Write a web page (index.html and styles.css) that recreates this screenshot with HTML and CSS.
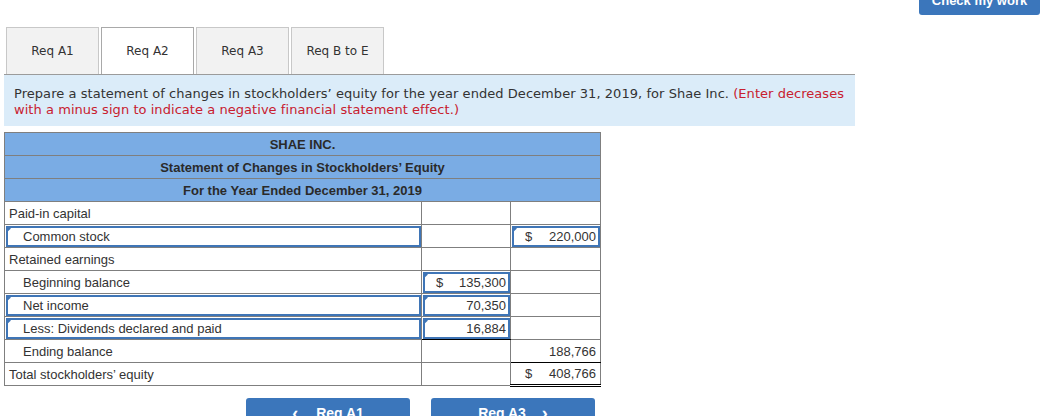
FILE: index.html
```html
<!DOCTYPE html>
<html>
<head>
<meta charset="utf-8">
<link rel="stylesheet" href="styles.css">
</head>
<body>
<div class="topbar"><button class="check">Check my work</button></div>
<div class="wrap">
  <div class="tabs">
    <div class="tab">Req A1</div>
    <div class="tab active">Req A2</div>
    <div class="tab">Req A3</div>
    <div class="tab">Req B to E</div>
  </div>
  <div class="instr">Prepare a statement of changes in stockholders’ equity for the year ended December 31, 2019, for Shae Inc. <span class="red">(Enter decreases with a minus sign to indicate a negative financial statement effect.)</span></div>
  <table class="stmt">
    <colgroup><col class="c1"><col class="c2"><col class="c3"></colgroup>
    <tr class="hd"><td colspan="3">SHAE INC.</td></tr>
    <tr class="hd"><td colspan="3">Statement of Changes in Stockholders’ Equity</td></tr>
    <tr class="hd"><td colspan="3">For the Year Ended December 31, 2019</td></tr>
    <tr><td>Paid-in capital</td><td></td><td></td></tr>
    <tr><td class="inp ind"><span class="flag"></span>Common stock</td><td></td><td class="inp num"><span class="flag"></span><span class="cur">$</span>220,000</td></tr>
    <tr><td>Retained earnings</td><td></td><td></td></tr>
    <tr><td class="ind">Beginning balance</td><td class="inp num"><span class="flag"></span><span class="cur">$</span>135,300</td><td></td></tr>
    <tr><td class="inp ind"><span class="flag"></span>Net income</td><td class="inp num"><span class="flag"></span>70,350</td><td></td></tr>
    <tr><td class="inp ind"><span class="flag"></span>Less: Dividends declared and paid</td><td class="inp num uline"><span class="flag"></span>16,884</td><td></td></tr>
    <tr><td class="ind">Ending balance</td><td></td><td class="num uline">188,766</td></tr>
    <tr><td>Total stockholders’ equity</td><td></td><td class="num dline"><span class="cur">$</span>408,766</td></tr>
  </table>
  <div class="nav">
    <button class="navbtn"><span class="chev">‹</span>Req A1</button>
    <button class="navbtn">Req A3<span class="chev r">›</span></button>
  </div>
</div>
</body>
</html>
```
FILE: styles.css
```css
html, body { margin: 0; padding: 0; background: #fff; }
body { width: 1042px; height: 416px; overflow: hidden; font-family: "DejaVu Sans", Verdana, sans-serif; color: #333; }

.topbar { height: 15px; display: flex; justify-content: flex-end; align-items: flex-end; padding-right: 2px; }
.check { width: 121px; height: 30px; background: #3b76bb; color: #fff; border: none; border-radius: 3px; font: bold 13px "Liberation Sans", Arial, sans-serif; flex: none; }

.wrap { margin-left: 4px; width: 851px; }

.tabs { display: flex; gap: 2px; padding-left: 2px; margin-top: 12px; }
.tab { width: 93px; height: 47px; box-sizing: border-box; background: #f2f2f2; border: 1px solid #c8c8c8; border-bottom: none; display: flex; align-items: center; justify-content: center; font-size: 12px; color: #333; }
.tab.active { background: #fff; border-color: #a9a9a9; }

.instr { background: #dbecf9; border-top: 1px solid #9b9b9b; padding: 11px 10px 8px 10px; font-size: 13px; line-height: 16px; letter-spacing: 0.05px; color: #333; }
.red { color: #c8202f; }

.stmt { margin-top: 6px; border-collapse: collapse; width: 596px; table-layout: fixed; font-family: "Liberation Sans", Arial, sans-serif; font-size: 13px; color: #333; }
.c1 { width: 417px; }
.c2 { width: 89px; }
.c3 { width: 90px; }
.stmt td { border: 1px solid #7f7f7f; height: 23px; padding: 0 4px; box-sizing: border-box; line-height: 15px; position: relative; white-space: nowrap; }
.stmt tr.hd td { background: #7aace4; text-align: center; font-weight: bold; color: #2a2a2a; }
.stmt td.ind { padding-left: 18px; }
.stmt td.num { text-align: right; padding-right: 4px; }
.cur { float: left; padding-left: 10px; }
.stmt td.inp { outline: 2px solid #3f75b6; outline-offset: -3px; }
.flag { position: absolute; left: 1px; top: 1px; width: 5px; height: 7px; background: #3f75b6; clip-path: polygon(0 0, 100% 35%, 0 100%); }
.stmt td.uline { border-bottom: 1px solid #000; }
.stmt td.dline { border-bottom: 3px double #000; }

.nav { display: flex; gap: 21px; padding-left: 242px; margin-top: 11px; }
.navbtn { width: 164px; height: 30px; background: #3b76bb; color: #fff; border: none; border-radius: 3px; font: bold 14px "Liberation Sans", Arial, sans-serif; display: flex; align-items: center; justify-content: center; }
.chev { font-size: 18px; margin-right: 18px; }
.chev.r { margin-right: 0; margin-left: 16px; }
```
